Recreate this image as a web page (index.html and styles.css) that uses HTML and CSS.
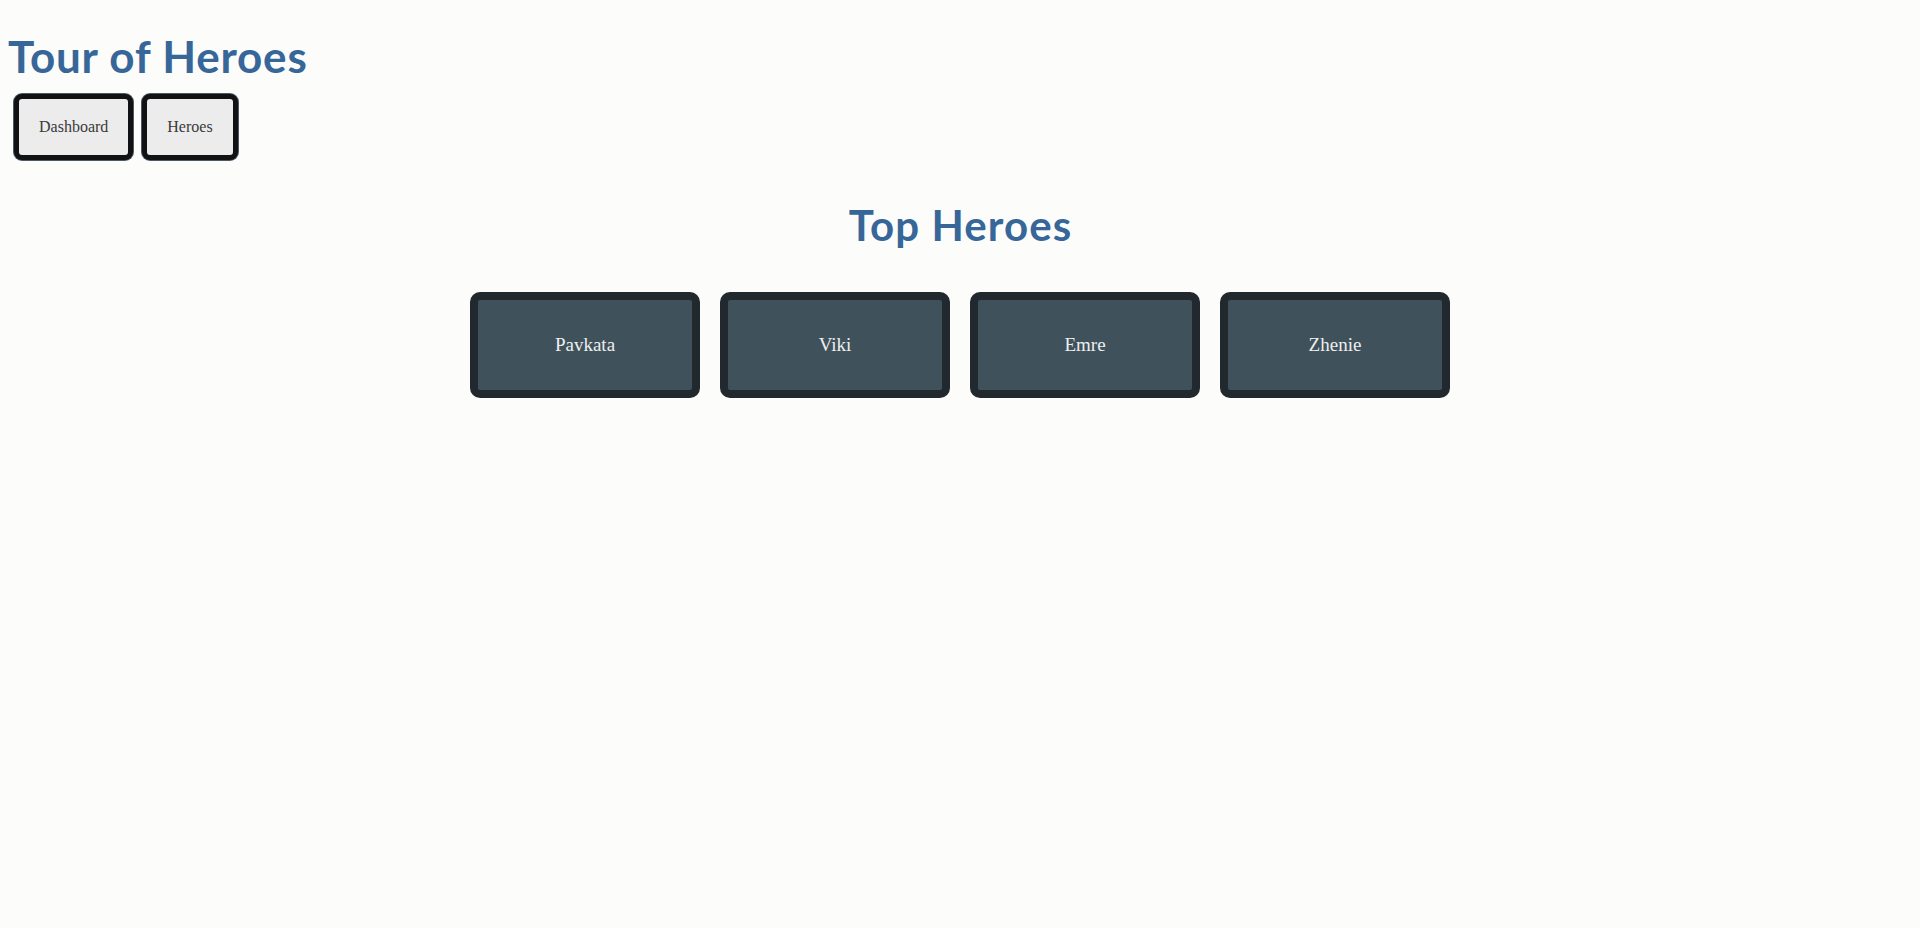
FILE: index.html
```html
<!DOCTYPE html>
<html lang="en">
<head>
<meta charset="utf-8">
<title>Tour of Heroes</title>
<link rel="stylesheet" href="styles.css">
</head>
<body>
  <h1 class="app-title">Tour of Heroes</h1>
  <nav class="nav">
    <a class="nav-link" href="#">Dashboard</a>
    <a class="nav-link" href="#">Heroes</a>
  </nav>
  <main class="dashboard">
    <h2 class="dashboard-title">Top Heroes</h2>
    <div class="hero-grid">
      <a class="hero-card" href="#">Pavkata</a>
      <a class="hero-card" href="#">Viki</a>
      <a class="hero-card" href="#">Emre</a>
      <a class="hero-card" href="#">Zhenie</a>
    </div>
  </main>
</body>
</html>
```

FILE: styles.css
```css
html, body {
  background: #fcfcfb;
}

body {
  margin: 8px;
  font-family: "Liberation Serif", "Times New Roman", serif;
}

.app-title {
  margin: 22px 0 0 0;
  font-family: Lato, "Noto Sans", sans-serif;
  font-weight: 700;
  font-size: 44px;
  line-height: 52px;
  letter-spacing: 0.8px;
  color: #376699;
}

.nav {
  display: flex;
  gap: 9px;
  margin-top: 12px;
  padding-left: 6px;
}

.nav-link {
  display: block;
  padding: 19px 20px;
  border: 5px solid #101214;
  border-radius: 8px;
  box-shadow: 0 0 0 1px #4d5966;
  background: #ececec;
  color: #3a3a3a;
  font-size: 16px;
  line-height: 18px;
  text-decoration: none;
}

.dashboard {
  display: flex;
  flex-direction: column;
  align-items: center;
}

.dashboard-title {
  margin: 40px 0 0 0;
  padding-left: 1px;
  font-family: Lato, "Noto Sans", sans-serif;
  font-weight: 700;
  font-size: 42px;
  line-height: 50px;
  letter-spacing: 1.1px;
  color: #376699;
}

.hero-grid {
  display: flex;
  gap: 20px;
  margin-top: 42px;
}

.hero-card {
  display: flex;
  align-items: center;
  justify-content: center;
  width: 230px;
  height: 106px;
  box-sizing: border-box;
  border: 8px solid #22292e;
  border-radius: 10px;
  background: #3f525c;
  color: #eeeeee;
  font-size: 19px;
  text-decoration: none;
}
```
